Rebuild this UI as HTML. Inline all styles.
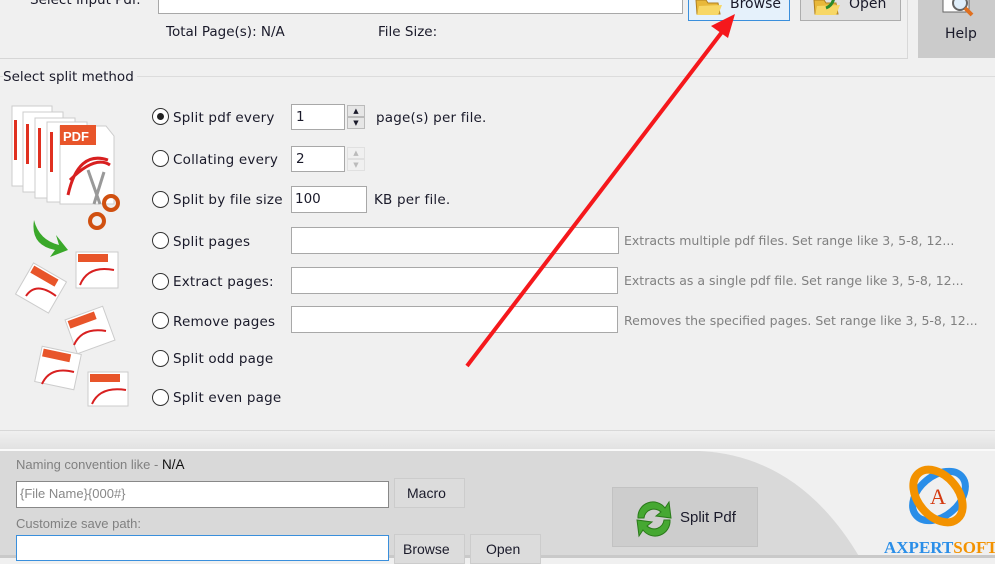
<!DOCTYPE html>
<html><head><meta charset="utf-8"><style>
*{margin:0;padding:0;box-sizing:border-box}
body{width:995px;height:558px;overflow:hidden;background:#f0f0f0;font-family:"DejaVu Sans","Liberation Sans",sans-serif;font-size:13px;color:#1a1a2a;position:relative}
.a{position:absolute;white-space:nowrap}
.in{position:absolute;background:#fff;border:1px solid #a8a8a8}
.btn{position:absolute;background:#e1e1e1;border:1px solid #adadad;text-align:center}
.r{position:absolute;width:17px;height:17px;border:1px solid #333;border-radius:50%;background:#fff}
.lbl{position:absolute;font-size:13.5px;white-space:nowrap;letter-spacing:0.2px}
.hint{position:absolute;font-size:12.5px;color:#808080;white-space:nowrap}
.n{font-family:"Liberation Sans",sans-serif;font-size:13px;color:#808080}
</style></head><body>
<div class="a" style="left:30px;top:-8px;font-size:13.5px">Select Input Pdf:</div>
<div class="in" style="left:158px;top:-6px;width:525px;height:20px"></div>
<div class="btn" style="left:688px;top:-6px;width:102px;height:27px;background:#e5f1fb;border-color:#3a8fdc"></div>
<div class="a" style="left:730px;top:-4px;font-size:14px">Browse</div>
<div class="btn" style="left:800px;top:-6px;width:101px;height:27px"></div>
<div class="a" style="left:849px;top:-4px;font-size:14px">Open</div>
<svg class="a" style="left:694px;top:-4px" width="30" height="22"><path d="M2 4 L12 4 L14 7 L24 7 L26 18 L3 18Z" fill="#e8b83a" stroke="#b08020"/><path d="M5 10 L28 9 L24 19 L3 19Z" fill="#f7d766"/></svg>
<svg class="a" style="left:812px;top:-4px" width="30" height="22"><path d="M2 4 L12 4 L14 7 L24 7 L26 18 L3 18Z" fill="#e8b83a" stroke="#b08020"/><path d="M5 10 L28 9 L24 19 L3 19Z" fill="#f7d766"/><path d="M14 12 q6 -2 8 -10" stroke="#2a8a2a" stroke-width="3" fill="none"/></svg>
<div class="a" style="left:907px;top:0;width:1px;height:58px;background:#d8d8d8"></div>
<div class="a" style="left:918px;top:0;width:77px;height:58px;background:#cbcbcb"></div>
<svg class="a" style="left:940px;top:-2px" width="40" height="20"><rect x="3" y="0" width="26" height="14" fill="#fff" stroke="#666"/><circle cx="20" cy="5" r="7" fill="#dfeefa" stroke="#666" stroke-width="2"/><path d="M25 10 L32 17" stroke="#e07020" stroke-width="4"/></svg>
<div class="a" style="left:945px;top:26px;font-size:14px">Help</div>
<div class="a" style="left:166px;top:24px;font-size:13.5px">Total Page(s): N/A</div>
<div class="a" style="left:378px;top:24px;font-size:13.5px">File Size:</div>
<div class="a" style="left:0;top:58px;width:908px;height:1px;background:#d6d6d6"></div>
<div class="a" style="left:0;top:76px;width:995px;height:1px;background:#dcdcdc"></div>
<div class="a" style="left:3px;top:69px;font-size:13.5px;background:#f0f0f0;padding-right:3px">Select split method</div>

<svg class="a" style="left:8px;top:100px" width="125" height="312">
<g stroke="#ccc" fill="#fff">
<rect x="4" y="6" width="40" height="80"/><rect x="15" y="12" width="40" height="80"/><rect x="27" y="18" width="40" height="80"/><rect x="39" y="22" width="40" height="80"/>
<path d="M52 26 L98 26 L106 36 L106 104 L52 104Z"/></g>
<g fill="#e03020"><rect x="6" y="20" width="3" height="40"/><rect x="18" y="24" width="3" height="40"/><rect x="30" y="28" width="3" height="40"/><rect x="42" y="32" width="3" height="40"/></g>
<rect x="52" y="25" width="36" height="20" fill="#e8552a"/><text x="55" y="41" font-family="Liberation Sans" font-size="13" font-weight="bold" fill="#fff">PDF</text>
<path d="M60 95 q10 -45 40 -35 M62 80 q25 -25 40 -15" stroke="#d82020" stroke-width="3" fill="none"/>
<path d="M80 70 L92 104 M96 72 L86 104" stroke="#999" stroke-width="3"/>
<circle cx="103" cy="103" r="7" fill="none" stroke="#d05010" stroke-width="4"/><circle cx="89" cy="121" r="7" fill="none" stroke="#d05010" stroke-width="4"/>
<path d="M26 120 q5 20 25 25 L48 135 L60 150 L42 157 L47 150 q-25 -5 -21 -30Z" fill="#3aa82a"/>
<g stroke="#ccc" fill="#fff">
<rect x="68" y="152" width="42" height="36"/><rect x="14" y="170" width="38" height="36" transform="rotate(30 33 188)"/>
<rect x="62" y="212" width="40" height="36" transform="rotate(-20 82 230)"/><rect x="30" y="250" width="40" height="36" transform="rotate(12 50 268)"/>
<rect x="80" y="272" width="40" height="34"/></g>
<g fill="#e8552a"><rect x="70" y="154" width="30" height="8"/><rect x="82" y="274" width="30" height="8"/><rect x="32" y="252" width="28" height="8" transform="rotate(12 50 268)"/><rect x="64" y="214" width="28" height="8" transform="rotate(-20 82 230)"/><rect x="16" y="172" width="28" height="8" transform="rotate(30 33 188)"/></g>
<g stroke="#d82020" stroke-width="2" fill="none"><path d="M72 185 q8 -20 34 -15"/><path d="M84 304 q8 -18 34 -14"/><path d="M34 284 q8 -18 32 -12"/><path d="M66 245 q8 -18 32 -14"/><path d="M18 196 q10 -15 30 0"/></g>
</svg>

<div class="r" style="left:152px;top:108px"></div><div class="a" style="left:157px;top:113px;width:7px;height:7px;border-radius:50%;background:#222"></div>
<div class="r" style="left:152px;top:150px"></div><div class="r" style="left:152px;top:191px"></div><div class="r" style="left:152px;top:232px"></div>
<div class="r" style="left:152px;top:273px"></div><div class="r" style="left:152px;top:312px"></div><div class="r" style="left:152px;top:350px"></div><div class="r" style="left:152px;top:389px"></div>
<div class="lbl" style="left:173px;top:110px">Split pdf every</div>
<div class="lbl" style="left:173px;top:152px">Collating every</div>
<div class="lbl" style="left:173px;top:192px">Split by file size</div>
<div class="lbl" style="left:173px;top:234px">Split pages</div>
<div class="lbl" style="left:173px;top:274px">Extract pages:</div>
<div class="lbl" style="left:173px;top:314px">Remove pages</div>
<div class="lbl" style="left:173px;top:351px">Split odd page</div>
<div class="lbl" style="left:173px;top:390px">Split even page</div>

<div class="in" style="left:291px;top:104px;width:54px;height:26px"></div><div class="a" style="left:296px;top:109px;font-size:13.5px">1</div>
<div class="a" style="left:347px;top:105px;width:18px;height:12px;background:#e6e6e6;border:1px solid #bbb;font-size:7px;text-align:center;line-height:10px">▲</div>
<div class="a" style="left:347px;top:117px;width:18px;height:12px;background:#e6e6e6;border:1px solid #bbb;font-size:7px;text-align:center;line-height:10px">▼</div>
<div class="lbl" style="left:376px;top:110px">page(s) per file.</div>
<div class="in" style="left:291px;top:146px;width:54px;height:26px"></div><div class="a" style="left:296px;top:151px;font-size:13.5px">2</div>
<div class="a" style="left:347px;top:147px;width:18px;height:12px;border:1px solid #e0e0e0;font-size:7px;color:#bbb;text-align:center;line-height:10px">▲</div>
<div class="a" style="left:347px;top:159px;width:18px;height:12px;border:1px solid #e0e0e0;font-size:7px;color:#bbb;text-align:center;line-height:10px">▼</div>
<div class="in" style="left:291px;top:186px;width:76px;height:27px"></div><div class="a" style="left:295px;top:191px;font-size:13.5px">100</div>
<div class="lbl" style="left:374px;top:192px">KB per file.</div>
<div class="in" style="left:291px;top:227px;width:328px;height:27px"></div>
<div class="in" style="left:291px;top:267px;width:327px;height:27px"></div>
<div class="in" style="left:291px;top:306px;width:327px;height:27px"></div>
<div class="hint" style="left:624px;top:233px">Extracts multiple pdf files. Set range like 3, 5-8, 12...</div>
<div class="hint" style="left:624px;top:273px">Extracts as a single pdf file. Set range like 3, 5-8, 12...</div>
<div class="hint" style="left:624px;top:313px">Removes the specified pages. Set range like 3, 5-8, 12...</div>

<div class="a" style="left:0;top:430px;width:995px;height:1px;background:#d8d8d8"></div>
<div class="a" style="left:0;top:431px;width:995px;height:18px;background:linear-gradient(#f0f0f0,#e2e2e2)"></div>
<div class="a" style="left:0;top:449px;width:995px;height:2px;background:#fafafa"></div>
<svg class="a" style="left:0;top:451px" width="995" height="107"><path d="M0 0 L700 0 Q800 5 860 107 L0 107Z" fill="#d9d9d9"/><rect x="0" y="104" width="995" height="3" fill="#c9c9c9"/></svg>
<div class="a n" style="left:16px;top:457px">Naming convention like - <span style="color:#111;font-size:13.5px">N/A</span></div>
<div class="in" style="left:16px;top:481px;width:373px;height:27px;border-color:#888"></div>
<div class="a n" style="left:20px;top:486px;color:#888">{File Name}{000#}</div>
<div class="btn" style="left:394px;top:478px;width:71px;height:30px;background:#dcdcdc;border-color:#ccc"></div><div class="a" style="left:407px;top:485px;font-family:'Liberation Sans';font-size:14px">Macro</div>
<div class="a n" style="left:16px;top:516px">Customize save path:</div>
<div class="in" style="left:16px;top:535px;width:373px;height:26px;border-color:#3a8fdc"></div>
<div class="btn" style="left:394px;top:534px;width:71px;height:30px;background:#dcdcdc;border-color:#ccc"></div><div class="a" style="left:403px;top:541px;font-family:'Liberation Sans';font-size:14px">Browse</div>
<div class="btn" style="left:470px;top:534px;width:71px;height:30px;background:#dcdcdc;border-color:#ccc"></div><div class="a" style="left:486px;top:541px;font-family:'Liberation Sans';font-size:14px">Open</div>
<div class="btn" style="left:612px;top:487px;width:146px;height:60px;background:#cdcdcd;border-color:#c2c2c2"></div>
<svg class="a" style="left:632px;top:498px" width="44" height="42"><path d="M6 20 A15 15 0 0 1 33 10 L37 4 L39 20 L24 18 L29 14 A10 10 0 0 0 12 20Z" fill="#46a832" stroke="#2a7a1a"/><path d="M38 22 A15 15 0 0 1 11 32 L7 38 L5 22 L20 24 L15 28 A10 10 0 0 0 32 22Z" fill="#46a832" stroke="#2a7a1a"/></svg>
<div class="a" style="left:680px;top:509px;font-family:'Liberation Sans';font-size:15px">Split Pdf</div>
<svg class="a" style="left:905px;top:460px" width="70" height="72"><ellipse cx="34" cy="36" rx="30" ry="20" transform="rotate(-40 34 36)" fill="none" stroke="#2a8ee8" stroke-width="7"/><ellipse cx="33" cy="36" rx="30" ry="20" transform="rotate(50 33 36)" fill="none" stroke="#f39200" stroke-width="8"/><text x="25" y="44" font-family="Liberation Serif" font-size="22" fill="#d43a10">A</text></svg>
<div class="a" style="left:884px;top:538px;font-family:'Liberation Serif';font-size:17px;font-weight:bold;color:#2a8ee8">AXPERT<span style="color:#f39200">SOFT</span></div>

<svg class="a" style="left:0;top:0" width="995" height="558"><path d="M467 366 L722 32" stroke="#f5181c" stroke-width="4"/><path d="M735 14 L711 26 L728 38Z" fill="#f5181c"/></svg>
</body></html>
